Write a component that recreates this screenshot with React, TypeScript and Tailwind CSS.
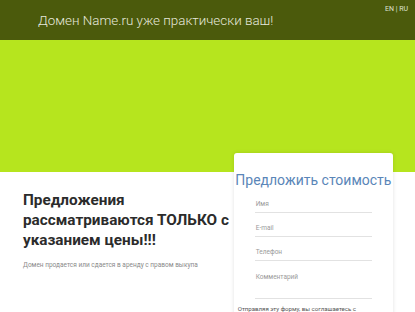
export default function App() {
  const fields = ["Имя", "E-mail", "Телефон"];

  return (
    <div className="min-h-screen bg-white font-['Roboto',sans-serif] overflow-hidden">
      {/* header */}
      <header className="h-[40px] bg-[#4b5a0c] flex items-start justify-between pl-[38px] pr-[7px]">
        <h1 className="mt-[11px] text-[13.4px] leading-[20px] font-light text-[#e6e8dc]">
          Домен Name.ru уже практически ваш!
        </h1>
        <div className="mt-[4px] text-[7px] leading-[10px] text-[#dfe3d0]">EN | RU</div>
      </header>

      {/* lime band */}
      <section className="h-[132px] bg-[#b6e51e]" />

      {/* content */}
      <main className="flex pl-[23px]">
        <div className="w-[212px] pt-[18px]">
          <h2 className="text-[15.3px] leading-[20px] font-bold text-[#2b2b2b]">
            Предложения
            <br />
            рассматриваются ТОЛЬКО с
            <br />
            указанием цены!!!
          </h2>
          <p className="mt-[11px] text-[6.5px] leading-[9px] text-[#8a8a8a]">
            Домен продается или сдается в аренду с правом выкупа
          </p>
        </div>

        <div className="ml-auto mr-[22px] w-[160px] -mt-[19px] bg-white rounded-t-[3px] shadow-[0_0_4px_rgba(0,0,0,0.12)] pt-[18px] px-[21px] pb-[10px]">
          <h3 className="-mx-[21px] text-center text-[14px] leading-[18px] text-[#5a86b8] whitespace-nowrap">
            Предложить стоимость
          </h3>
          <div className="mt-[7px] flex flex-col gap-[7px]">
            {fields.map((f) => (
              <div key={f} className="h-[17px] border-b border-[#e2e2e2] flex items-end pb-[4px] pl-[1px]">
                <span className="text-[6.5px] leading-[8px] text-[#9a9a9a]">{f}</span>
              </div>
            ))}
            <div className="h-[31px] border-b border-[#e2e2e2] pt-[5px] pl-[1px] leading-[8px]">
              <span className="block text-[6.5px] leading-[8px] text-[#9a9a9a]">Комментарий</span>
            </div>
          </div>
          <p className="-mx-[18px] mt-[5px] pl-[1px] text-[6.1px] leading-[9px] text-[#555] whitespace-nowrap">
            Отправляя эту форму, вы соглашаетесь с
          </p>
        </div>
      </main>
    </div>
  );
}
